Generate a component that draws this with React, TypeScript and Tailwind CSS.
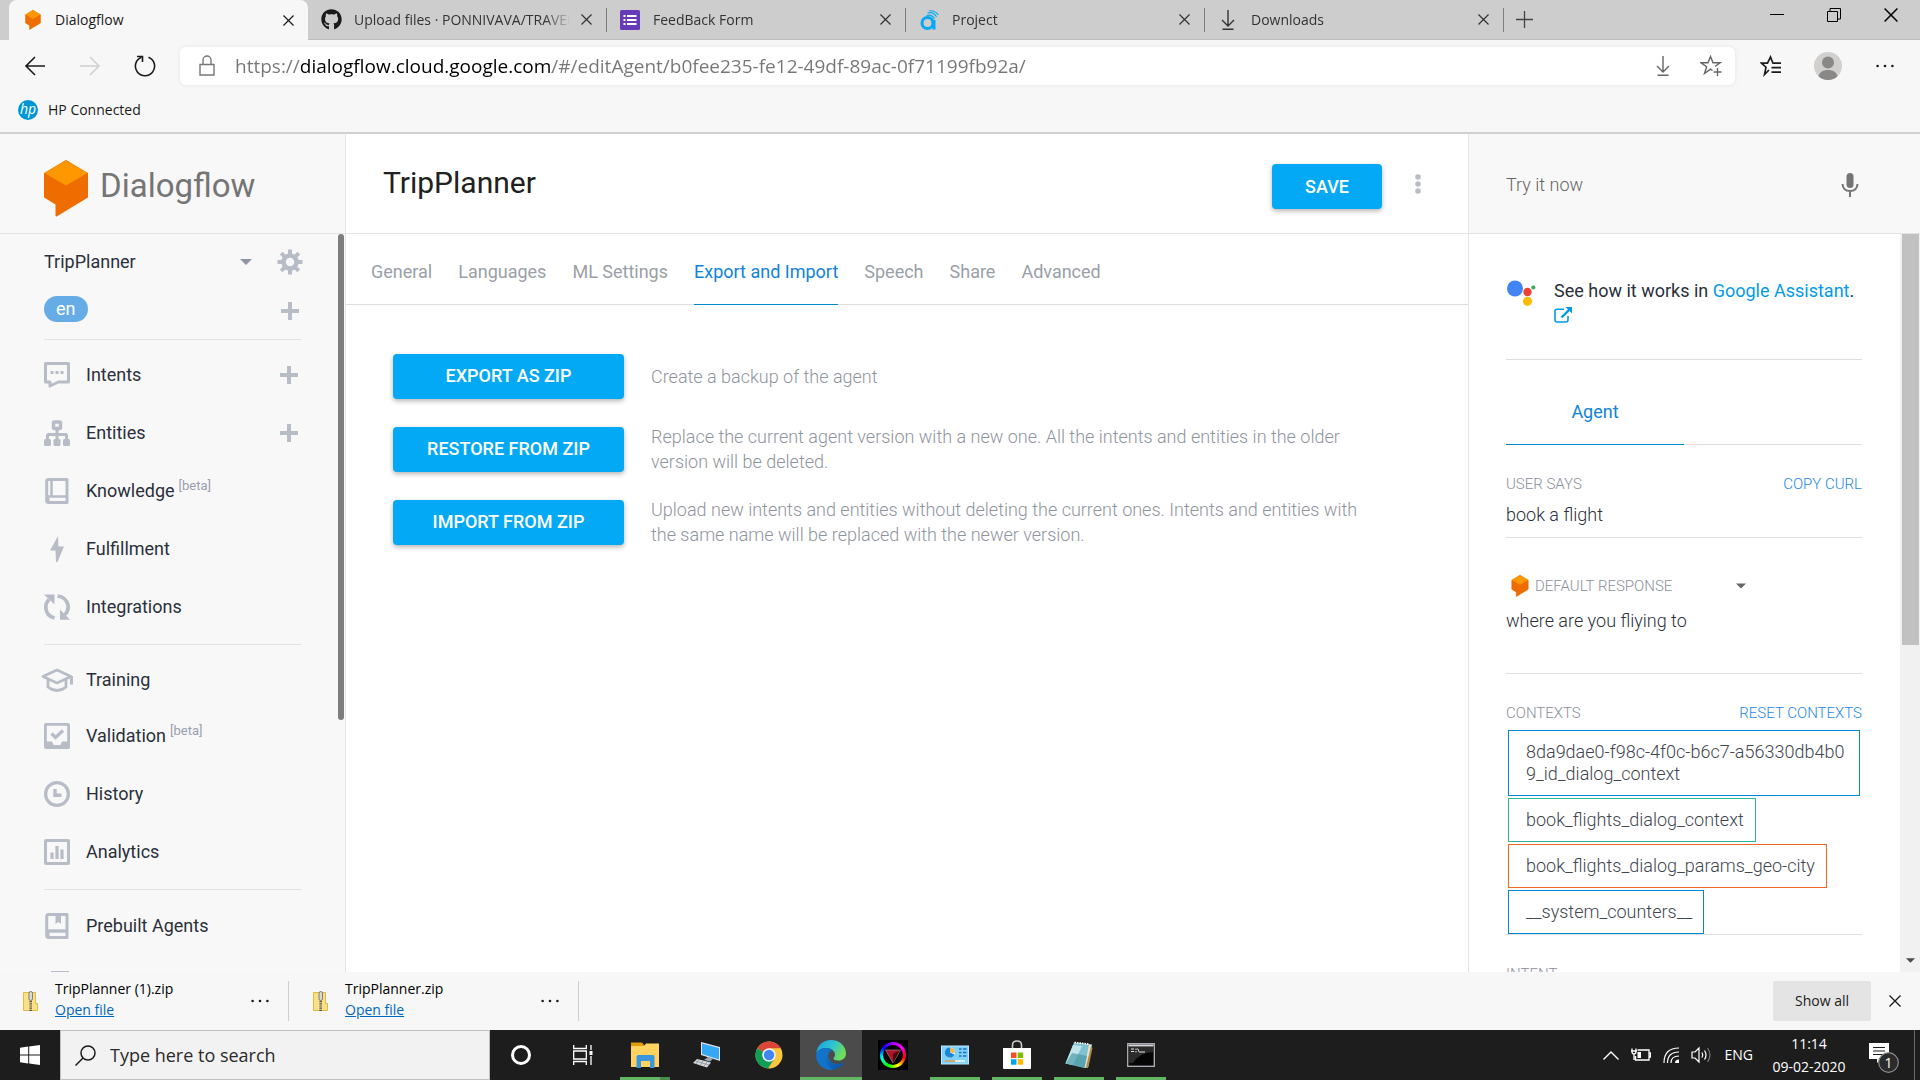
import React from "react";
import { FaGithub } from "react-icons/fa";

type IconProps = { className?: string };

const SEGOE = "font-['Open_Sans','Noto_Sans',sans-serif]";

/* ---------- Browser chrome icons ---------- */

function DialogflowMark({ className }: IconProps) {
  return (
    <svg viewBox="0 0 44 57" className={className} aria-hidden="true">
      <path d="M22 1 43 13.5V37L12.500 55.500V44L1 37V13.500Z" fill="#ef6c00" stroke="#ef6c00" strokeWidth="2" strokeLinejoin="round" />
      <path d="M22 0.500 43.500 13 22 25.500 0.500 13Z" fill="#ff9800" />
    </svg>
  );
}

function FormsIcon() {
  return (
    <svg viewBox="0 0 20 20" className="size-5" aria-hidden="true">
      <rect width="20" height="20" rx="1.500" fill="#673ab7" />
      <g fill="#fff">
        <rect x="3.500" y="5" width="2" height="2" />
        <rect x="3.500" y="9" width="2" height="2" />
        <rect x="3.500" y="13" width="2" height="2" />
        <rect x="7" y="5" width="9.500" height="2" />
        <rect x="7" y="9" width="9.500" height="2" />
        <rect x="7" y="13" width="9.500" height="2" />
      </g>
    </svg>
  );
}

function ProjectIcon() {
  return (
    <svg viewBox="0 0 20 20" className="size-5" fill="none" stroke="#03a9f4" aria-hidden="true">
      <circle cx="8.500" cy="13" r="5.500" strokeWidth="3" />
      <path d="M15 10V19.500" strokeWidth="3" />
      <path d="M7.500 5.500C11 4.500 14 6 15.500 9M8.500 3C12.500 2 16 4 17.500 7M10 .8C13.500.5 17.500 2 19.200 5" strokeWidth="1.100" />
    </svg>
  );
}

function DownArrow({ className }: IconProps) {
  return (
    <svg viewBox="0 0 20 20" className={className} fill="none" stroke="currentColor" strokeWidth="1.400" aria-hidden="true">
      <path d="M10 0V15.500M4 10 10 16 16 10M4.500 19.300H15.500" />
    </svg>
  );
}

function Cross({ className }: IconProps) {
  return (
    <svg viewBox="0 0 12 12" className={className} fill="none" stroke="currentColor" strokeWidth="1.300" aria-hidden="true">
      <path d="M.5.500 11.500 11.500M11.500.500.500 11.500" />
    </svg>
  );
}

function Dots({ className }: IconProps) {
  return (
    <svg viewBox="0 0 18 4" className={className} fill="currentColor" aria-hidden="true">
      <circle cx="1.600" cy="2" r="1.300" />
      <circle cx="9" cy="2" r="1.300" />
      <circle cx="16.400" cy="2" r="1.300" />
    </svg>
  );
}

/* ---------- Sidebar icons ---------- */

function SideSvg({ children }: { children: React.ReactNode }) {
  return (
    <svg viewBox="0 0 26 26" className="size-[26px] shrink-0 text-[#b7bcc6]" fill="none" stroke="currentColor" aria-hidden="true">
      {children}
    </svg>
  );
}

const IntentsIcon = () => (
  <SideSvg>
    <path d="M1.500 1.500H24.500V20H14.500L6 24V20H1.500Z" strokeWidth="3" strokeLinejoin="round" />
    <path d="M6.500 10.500H9.500M11.500 10.500H14.500M16.500 10.500H19.500" strokeWidth="3" />
  </SideSvg>
);
const EntitiesIcon = () => (
  <SideSvg>
    <rect x="9.500" y="2" width="7" height="6.500" rx="1" strokeWidth="3.500" />
    <path d="M13 9V20M3.500 20V15.500Q3.500 14.500 4.500 14.500H21.500Q22.500 14.500 22.500 15.500V20" strokeWidth="3" />
    <g fill="currentColor" stroke="none">
      <rect x="0" y="19" width="7" height="7" rx="1.500" />
      <rect x="9.500" y="19" width="7" height="7" rx="1.500" />
      <rect x="19" y="19" width="7" height="7" rx="1.500" />
    </g>
  </SideSvg>
);
const KnowledgeIcon = () => (
  <SideSvg>
    <path d="M4.500 1.500H23V24.500H4.500Q2.700 24.500 2.700 22.500V3.500Q2.700 1.500 4.500 1.500Z" strokeWidth="3" strokeLinejoin="round" />
    <path d="M7.500 2V18M3 18.500H23" strokeWidth="2.600" />
    <path d="M3 20H5V24H3Z" fill="currentColor" />
  </SideSvg>
);
const FulfillmentIcon = () => (
  <SideSvg>
    <path d="M14 0 6 14.500H11.500L12 26H13.500L20 10.500H14.500Z" fill="currentColor" stroke="none" />
  </SideSvg>
);
const IntegrationsIcon = () => (
  <SideSvg>
    <path d="M5 5.500Q1.500 9 1.800 14Q2.500 22 10.500 24M13.500 2Q22 3 24 11Q25 17 20.500 21" strokeWidth="3.600" />
    <path d="M0 .5H10.500V10.500ZM26 25.800H16V15.500Z" fill="currentColor" stroke="none" />
  </SideSvg>
);
const TrainingIcon = () => (
  <svg viewBox="0 0 34 26" className="h-[26px] w-[34px] shrink-0 text-[#b7bcc6]" fill="none" stroke="currentColor" strokeLinejoin="round" aria-hidden="true">
    <path d="M3 9.500 17 3 31 9.500 17 16Z" strokeWidth="2.600" />
    <path d="M8 12V20Q17 27 26 20V12" strokeWidth="2.800" />
    <path d="M31.500 9V17.500" strokeWidth="3" />
  </svg>
);
const ValidationIcon = () => (
  <SideSvg>
    <rect x="1.400" y="1.400" width="23.200" height="23.200" rx=".6" strokeWidth="2.800" />
    <path d="M1 18.500H8L9.500 22H16.500L18 18.500H25V25H1Z" fill="currentColor" stroke="none" />
    <path d="M7.500 10.500 11.500 14.500 19 7.500" strokeWidth="3.200" />
  </SideSvg>
);
const HistoryIcon = () => (
  <SideSvg>
    <circle cx="13" cy="13" r="11.400" strokeWidth="3.200" />
    <path d="M11 8V14.200H17.500" strokeWidth="3.400" />
  </SideSvg>
);
const AnalyticsIcon = () => (
  <SideSvg>
    <rect x="1.500" y="1.500" width="23" height="23" rx=".6" strokeWidth="3" />
    <path d="M8 13.500V20M13 7V20M18 10.500V20" strokeWidth="3.200" />
  </SideSvg>
);
const PrebuiltIcon = () => (
  <SideSvg>
    <path d="M4.500 1.500H23V24.500H5Q2.700 24.500 2.700 22.500V3.500Q2.700 1.500 4.500 1.500Z" strokeWidth="3" strokeLinejoin="round" />
    <path d="M3 18H23" strokeWidth="3.400" />
    <path d="M11.500 2V11L14.200 9 17 11V2ZM3 19H5.500V25H3Z" fill="currentColor" stroke="none" />
  </SideSvg>
);
const SmallTalkIcon = () => (
  <SideSvg>
    <path d="M8.500 1.500H23.500V17H8.500Z" strokeWidth="3" />
  </SideSvg>
);

function PlusIcon() {
  return (
    <svg viewBox="0 0 18 18" className="size-[18px]" stroke="#b7bcc6" strokeWidth="4" aria-hidden="true">
      <path d="M9 0V18M0 9H18" />
    </svg>
  );
}

function GearIcon() {
  return (
    <svg viewBox="0 0 26 26" className="size-[26px]" fill="none" stroke="#b7bcc6" aria-hidden="true">
      <circle cx="13" cy="13" r="6.500" strokeWidth="4.500" />
      <path
        d="M13 .5V5M13 21V25.500M.5 13H5M21 13H25.500M4.200 4.200 7.400 7.400M18.600 18.600 21.800 21.800M21.800 4.200 18.600 7.400M7.400 18.600 4.200 21.800"
        strokeWidth="4"
      />
    </svg>
  );
}

function Caret({ className }: IconProps) {
  return (
    <svg viewBox="0 0 12 6" className={className} fill="currentColor" aria-hidden="true">
      <path d="M0 0H12L6 6Z" />
    </svg>
  );
}

/* ---------- Browser frame ---------- */

type Tab = { title: string; icon: React.ReactNode };

const tabs: Tab[] = [
  { title: "Upload files · PONNIVAVA/TRAVEL", icon: <FaGithub className="size-[21px] text-[#1b1b1b]" /> },
  { title: "FeedBack Form", icon: <FormsIcon /> },
  { title: "Project", icon: <ProjectIcon /> },
  { title: "Downloads", icon: <DownArrow className="size-5" /> },
];

function TabBar() {
  return (
    <div className="flex h-10 shrink-0 items-stretch bg-[#cdcdcd] pl-[9px] text-sm text-[#333]">
      <div className="flex w-[299px] items-center rounded-t-lg bg-[#f7f7f7] pr-2.5 pl-4 text-[#1b1b1b]">
        <DialogflowMark className="h-5 w-4" />
        <span className="ml-[14px] flex-1">Dialogflow</span>
        <button aria-label="Close Dialogflow tab" className="p-1">
          <Cross className="size-[11px]" />
        </button>
      </div>
      {tabs.map((t) => (
        <div key={t.title} className="flex w-[299px] items-center border-b border-[#bdbdbd] pl-3">
          <span className="flex w-[22px] shrink-0 justify-center">{t.icon}</span>
          <span className="ml-3 flex-1 overflow-hidden whitespace-nowrap [mask-image:linear-gradient(to_right,#000_190px,transparent_218px)]">
            {t.title}
          </span>
          <button aria-label={"Close " + t.title + " tab"} className="ml-2 p-1">
            <Cross className="size-[11px]" />
          </button>
          <span className="ml-2.5 h-6 w-px bg-[#7d7d7d]" />
        </div>
      ))}
      <div className="flex flex-1 items-center justify-between border-b border-[#bdbdbd] pr-[22px] pl-3">
        <button aria-label="New tab">
          <svg viewBox="0 0 17 17" className="size-[17px]" stroke="#444" strokeWidth="1.300" aria-hidden="true">
            <path d="M8.500 0V17M0 8.500H17" />
          </svg>
        </button>
        <div className="flex items-center gap-[43px] pb-2.5 text-black">
          <button aria-label="Minimize">
            <svg viewBox="0 0 14 14" className="size-3.5" stroke="currentColor" aria-hidden="true">
              <path d="M0 6.500H14" />
            </svg>
          </button>
          <button aria-label="Restore">
            <svg viewBox="0 0 14 14" className="size-3.5" fill="none" stroke="currentColor" aria-hidden="true">
              <path d="M.5 3.500H10.500V13.500H.5ZM3 3.500V.5H13.500V11H10.500" />
            </svg>
          </button>
          <button aria-label="Close window">
            <Cross className="size-3.5" />
          </button>
        </div>
      </div>
    </div>
  );
}

function Toolbar() {
  return (
    <div className="flex h-[51px] shrink-0 items-center pr-[26px] pl-6 text-[#1b1b1b]">
      <button aria-label="Back">
        <svg viewBox="0 0 22 20" className="h-5 w-[22px]" fill="none" stroke="currentColor" strokeWidth="1.600" aria-hidden="true">
          <path d="M21 10H2M11 1 2 10 11 19" />
        </svg>
      </button>
      <button aria-label="Forward" className="ml-[33px] text-[#d0d0d0]">
        <svg viewBox="0 0 22 20" className="h-5 w-[22px]" fill="none" stroke="currentColor" strokeWidth="1.600" aria-hidden="true">
          <path d="M1 10H20M11 1 20 10 11 19" />
        </svg>
      </button>
      <button aria-label="Reload" className="ml-[33px]">
        <svg viewBox="0 0 22 22" className="size-[22px]" fill="none" stroke="currentColor" strokeWidth="1.600" aria-hidden="true">
          <path d="M14.500 2.200A9.600 9.600 0 1 1 7.500 2.200" />
          <path d="M3 1.500H8.500V7" />
        </svg>
      </button>
      <div className="ml-6 flex h-[38px] flex-1 items-center rounded-md bg-white pr-[13px] pl-[19px] shadow-[0_0_5px_rgba(0,0,0,0.08)]">
        <svg viewBox="0 0 16 21" className="h-[21px] w-4 text-[#777]" fill="none" stroke="currentColor" strokeWidth="1.400" aria-hidden="true">
          <path d="M1 9.500H15V20H1ZM4 9.500V5A4 4 0 0 1 12 5V9.500" />
        </svg>
        <input
          aria-label="Address"
          defaultValue="https://dialogflow.cloud.google.com/#/editAgent/b0fee235-fe12-49df-89ac-0f71199fb92a/"
          className="ml-5 h-[34px] min-w-0 flex-1 bg-[linear-gradient(to_right,#767676_65px,#000_65px,#000_317px,#767676_317px)] bg-clip-text text-[19px] text-transparent outline-none"
        />
        <button aria-label="Downloads" className="text-[#666]">
          <DownArrow className="size-5" />
        </button>
        <button aria-label="Add to favorites" className="ml-[27px] text-[#666]">
          <svg viewBox="0 0 22 22" className="size-[22px]" fill="none" stroke="currentColor" strokeWidth="1.400" aria-hidden="true">
            <path d="M12.500 15.500 10.500 14.200 4.500 18.500 6.700 11.700 1 7.800H8L10.500 1.500 13 7.800H20L15 11.500" />
            <path d="M17.500 13V21M13.500 17H21.500" />
          </svg>
        </button>
      </div>
      <button aria-label="Favorites" className="ml-[25px]">
        <svg viewBox="0 0 22 22" className="size-[22px]" fill="none" stroke="currentColor" strokeWidth="1.700" aria-hidden="true">
          <path d="M9 15 4.500 19.500 6 12.200 1.500 8.200H7.500L10.500 2 13 8.200H21M11.500 12.700H21M11.500 17.200H21" />
        </svg>
      </button>
      <button aria-label="Profile" className="ml-8 size-7 overflow-hidden rounded-full bg-[#d2d0ce]">
        <svg viewBox="0 0 28 28" fill="#8a8886" aria-hidden="true">
          <circle cx="14" cy="10.500" r="6" />
          <path d="M4 28C4 20 9 18 14 18S24 20 24 28Z" />
        </svg>
      </button>
      <button aria-label="Settings and more" className="ml-[34px]">
        <Dots className="h-1 w-[18px]" />
      </button>
    </div>
  );
}

function Bookmarks() {
  return (
    <div className="flex h-[43px] shrink-0 items-start border-b-2 border-[#d0d0d0] pt-[9px] pl-[18px] text-sm text-[#1b1b1b]">
      <a href="#hp" className="flex items-center gap-2.5">
        <span className="flex size-5 items-center justify-center rounded-full bg-[#0096d6] pb-0.5 text-sm leading-none font-normal text-white italic">hp</span>
        HP Connected
      </a>
    </div>
  );
}

/* ---------- Dialogflow sidebar ---------- */

type NavItem = { label: string; icon: React.ReactNode; beta?: boolean; add?: boolean };

function NavRow({ item, height = "h-[58px]" }: { item: NavItem; height?: string }) {
  return (
    <li className={"flex items-center " + height}>
      <a href={"#" + item.label} className="flex flex-1 items-center">
        <span className="flex w-[26px] shrink-0 justify-center">{item.icon}</span>
        <span className="ml-4">{item.label}</span>
        {item.beta && <span className="mb-2.5 ml-1 text-[13px] text-[#9a9fae]">[beta]</span>}
      </a>
      {item.add && (
        <button aria-label={"Add " + item.label} className="mr-[3px]">
          <PlusIcon />
        </button>
      )}
    </li>
  );
}

function Sidebar() {
  const first: NavItem[] = [
    { label: "Intents", icon: <IntentsIcon />, add: true },
    { label: "Entities", icon: <EntitiesIcon />, add: true },
    { label: "Knowledge", icon: <KnowledgeIcon />, beta: true },
    { label: "Fulfillment", icon: <FulfillmentIcon /> },
    { label: "Integrations", icon: <IntegrationsIcon /> },
  ];
  const second: NavItem[] = [
    { label: "Training", icon: <TrainingIcon /> },
    { label: "Validation", icon: <ValidationIcon />, beta: true },
    { label: "History", icon: <HistoryIcon /> },
    { label: "Analytics", icon: <AnalyticsIcon /> },
  ];
  return (
    <aside className="flex w-[346px] shrink-0 flex-col border-r border-[#e4e4e4] bg-[#f8f8f8] text-lg text-[#2b303b]">
      <div className="flex h-[100px] shrink-0 items-center border-b border-[#e4e4e4] pt-2.5 pl-11">
        <DialogflowMark className="h-[57px] w-11" />
        <span className="ml-3 pb-1.5 text-[33px] leading-10 text-[#757575]">Dialogflow</span>
      </div>
      <div className="flex min-h-0 flex-1">
        <div className="min-w-0 flex-1 overflow-hidden pr-[37px] pl-11">
          <div className="flex h-14 items-center">
            <div className="relative flex flex-1 items-center">
              <select aria-label="Agent" className="w-[212px] appearance-none bg-transparent outline-none">
                <option>TripPlanner</option>
              </select>
              <Caret className="pointer-events-none absolute right-[25px] h-1.5 w-3 text-[#8f95a5]" />
            </div>
            <button aria-label="Agent settings" className="-mr-0.5">
              <GearIcon />
            </button>
          </div>
          <div className="flex h-[50px] items-start justify-between border-b border-[#e2e2e2] pt-1.5">
            <span className="h-[26px] rounded-full bg-[#66ade8] px-3 leading-[25px] text-white">en</span>
            <button aria-label="Add language" className="mt-1.5 mr-0.5">
              <PlusIcon />
            </button>
          </div>
          <ul className="border-b border-[#e2e2e2] pt-1.5 pb-2">
            {first.map((i) => (
              <NavRow key={i.label} item={i} />
            ))}
          </ul>
          <ul className="border-b border-[#e2e2e2] pt-2 pb-2">
            {second.map((i) => (
              <NavRow key={i.label} item={i} height={i.label === "Training" ? "h-[54px]" : "h-[58px]"} />
            ))}
          </ul>
          <ul className="pt-[7px]">
            <NavRow item={{ label: "Prebuilt Agents", icon: <PrebuiltIcon /> }} />
            <li className="flex h-[58px] items-center">
              <a href="#small-talk" aria-label="Small Talk">
                <SmallTalkIcon />
              </a>
            </li>
          </ul>
        </div>
        <div className="mr-px h-[486px] w-1.5 shrink-0 rounded-full bg-[#7d7d7d]" />
      </div>
    </aside>
  );
}

/* ---------- Main panel ---------- */

const blueButton = "h-[45px] rounded-sm bg-[#03a9f4] text-lg font-medium text-white shadow-[0_2px_5px_rgba(0,0,0,0.3)]";

const actions = [
  { label: "EXPORT AS ZIP", text: "Create a backup of the agent" },
  {
    label: "RESTORE FROM ZIP",
    text: "Replace the current agent version with a new one. All the intents and entities in the older version will be deleted.",
  },
  {
    label: "IMPORT FROM ZIP",
    text: "Upload new intents and entities without deleting the current ones. Intents and entities with the same name will be replaced with the newer version.",
  },
];

const sections = ["General", "Languages", "ML Settings", "Export and Import", "Speech", "Share", "Advanced"];

function MainPanel() {
  return (
    <main className="flex min-w-0 flex-1 flex-col bg-white">
      <header className="flex h-[100px] items-center border-b border-[#e4e4e4] pr-[47px] pl-[37px]">
        <h1 className="flex-1 pb-0.5 text-[30px] text-[#212121]">TripPlanner</h1>
        <button className={blueButton + " mt-1.5 w-[110px]"}>SAVE</button>
        <button aria-label="More options" className="ml-[33px]">
          <svg viewBox="0 0 6 20" className="h-5 w-1.5" fill="#b7bcc6" aria-hidden="true">
            <circle cx="3" cy="3" r="2.800" />
            <circle cx="3" cy="10" r="2.800" />
            <circle cx="3" cy="17" r="2.800" />
          </svg>
        </button>
      </header>
      <nav className="flex h-[71px] gap-[26px] border-b border-[#dedede] pl-[25px] text-lg text-[#9a9fa8]">
        {sections.map((s) => (
          <a
            key={s}
            href={"#" + s}
            className={
              s === "Export and Import"
                ? "-mb-px flex items-center border-b border-[#0288d1] text-[#1083dc]"
                : "flex items-center"
            }
          >
            <span className="mt-1.5 pb-px">{s}</span>
          </a>
        ))}
      </nav>
      <div className="flex flex-col gap-[23px] pt-[46px] pr-9 pl-[47px]">
        {actions.map((a) => (
          <div key={a.label} className="flex min-h-[50px] items-center">
            <button className={blueButton + " w-[231px] shrink-0"}>{a.label}</button>
            <p className="ml-[27px] max-w-[720px] text-lg leading-[25px] font-light text-[#8f949e]">{a.text}</p>
          </div>
        ))}
      </div>
    </main>
  );
}

/* ---------- Test console ---------- */

const contexts = [
  { name: "8da9dae0-f98c-4f0c-b6c7-a56330db4b09_id_dialog_context", border: "border-[#0288d1]" },
  { name: "book_flights_dialog_context", border: "border-[#2bb596]" },
  { name: "book_flights_dialog_params_geo-city", border: "border-[#f26722]" },
  { name: "__system_counters__", border: "border-[#0288d1]" },
];

const caption = "text-[15px] leading-6 font-light text-[#8a8f99]";
const captionLink = "text-[15px] leading-6 font-light text-[#1e88e5]";

function TestPanel() {
  return (
    <aside className="flex w-[452px] shrink-0 flex-col border-l border-[#e4e4e4] bg-white text-lg text-[#2b303b]">
      <div className="flex h-[100px] shrink-0 items-center border-b border-[#e4e4e4] bg-[#f8f8f8] pt-0.5 pr-[61px] pl-[37px]">
        <input aria-label="Try it now" placeholder="Try it now" className="min-w-0 flex-1 font-light outline-none placeholder:text-[#666]" />
        <button aria-label="Speak">
          <svg viewBox="0 0 18 24" className="h-6 w-[18px]" fill="none" stroke="#757575" aria-hidden="true">
            <rect x="5.500" y="0" width="7" height="15" rx="3.500" fill="#757575" stroke="none" />
            <path d="M1.500 11Q2 18 9 18T16.500 11M9 18V24" strokeWidth="2" />
          </svg>
        </button>
      </div>
      <div className="flex min-h-0 flex-1">
        <div className="min-w-0 flex-1 overflow-hidden pr-[38px] pl-[37px]">
          <div className="flex border-b border-[#dedede] pt-[45px] pb-8">
            <svg viewBox="0 0 30 27" className="h-[27px] w-[30px] shrink-0" aria-hidden="true">
              <circle cx="9" cy="9.500" r="8" fill="#4285f4" />
              <circle cx="21.500" cy="13" r="4.200" fill="#ea4335" />
              <circle cx="21.500" cy="22.300" r="4.600" fill="#fbbc05" />
              <circle cx="27.300" cy="8.500" r="2" fill="#34a853" />
            </svg>
            <p className="ml-[18px] leading-6">
              See how it works in{" "}
              <a href="#assistant" className="text-[#039be5]">
                Google Assistant
              </a>
              .
              <a href="#assistant-link" aria-label="Open Google Assistant" className="block h-6 pt-1">
                <svg viewBox="0 0 18 16" className="h-4 w-[18px]" fill="none" stroke="#039be5" aria-hidden="true">
                  <path d="M10 2.200H3Q1 2.200 1 4V13Q1 15 3 15H12Q14 15 14 13V9" strokeWidth="1.600" />
                  <path d="M7.500 10.500 15.500 2.500" strokeWidth="2.400" />
                  <path d="M11.500 0H18V6.500Z" fill="#039be5" stroke="none" />
                </svg>
              </a>
            </p>
          </div>
          <div className="flex border-b border-[#dedede]">
            <button className="-mb-px w-1/2 border-b border-[#0288d1] pt-10 pb-5 leading-6 text-[#1083dc]">Agent</button>
          </div>
          <section className="border-b border-[#dedede] pt-[27px] pb-2.5">
            <div className="flex justify-between">
              <h2 className={caption}>USER SAYS</h2>
              <button className={captionLink}>COPY CURL</button>
            </div>
            <p className="mt-[7px] leading-6 font-light">book a flight</p>
          </section>
          <section className="border-b border-[#dedede] pt-9 pb-10">
            <div className="relative flex h-6 items-center pl-[5px]">
              <DialogflowMark className="h-[22px] w-[18px]" />
              <select aria-label="Response platform" className={caption + " ml-1.5 w-[212px] appearance-none bg-transparent outline-none"}>
                <option>DEFAULT RESPONSE</option>
              </select>
              <Caret className="pointer-events-none absolute left-[230px] h-1.5 w-2.5 text-[#666]" />
            </div>
            <p className="mt-[11px] leading-6 font-light">where are you fliying to</p>
          </section>
          <section className="border-b border-[#dedede] pt-[27px]">
            <div className="flex justify-between">
              <h2 className={caption}>CONTEXTS</h2>
              <button className={captionLink}>RESET CONTEXTS</button>
            </div>
            <ul className="mt-[5px] flex flex-col items-start gap-0.5 px-0.5">
              {contexts.map((c) => (
                <li key={c.name} className={"border py-2.5 pr-[11px] pl-[17px] leading-[22px] font-light break-all text-[#41464f] " + c.border}>
                  {c.name}
                </li>
              ))}
            </ul>
          </section>
          <section className="pt-[27px]">
            <h2 className={caption}>INTENT</h2>
          </section>
        </div>
        <div className="flex w-5 shrink-0 flex-col items-center justify-between bg-[#f1f1f1] pb-[9px]">
          <div className="h-[411px] w-[17px] bg-[#c1c1c1]" />
          <Caret className="h-[5px] w-[9px] text-[#4a4a4a]" />
        </div>
      </div>
    </aside>
  );
}

/* ---------- Downloads bar ---------- */

function ZipIcon() {
  return (
    <svg viewBox="0 0 15 20" className="h-5 w-[15px]" aria-hidden="true">
      <path d="M.5 1.500H12.500V12.500H14.500V19.500H.5Z" fill="#fbe08a" stroke="#e6b93f" />
      <rect x="6" y=".5" width="3.500" height="9" rx="1.700" fill="#d9d9d9" stroke="#666" strokeWidth=".8" />
      <path d="M7.700 10V20" stroke="#555" strokeWidth="2.600" strokeDasharray="1.200 1" />
    </svg>
  );
}

function DownloadsBar() {
  return (
    <div className={"flex h-[58px] shrink-0 items-center bg-[#f7f7f7] pr-[19px] text-sm text-[#1b1b1b] " + SEGOE}>
      {["TripPlanner (1).zip", "TripPlanner.zip"].map((f) => (
        <div key={f} className="mr-px flex h-10 w-[289px] items-center border-r border-[#cfcfcf] pr-[19px] pl-[23px]">
          <ZipIcon />
          <div className="mb-1 ml-[17px] flex-1 leading-[21px]">
            <div className="text-black">{f}</div>
            <a href={"#" + f} className="text-[#0067c0] underline">
              Open file
            </a>
          </div>
          <button aria-label={"Options for " + f}>
            <Dots className="h-1 w-[18px]" />
          </button>
        </div>
      ))}
      <button className="ml-auto h-10 w-[98px] rounded-xs bg-[#e4e4e4] font-medium">Show all</button>
      <button aria-label="Close downloads bar" className="ml-[18px]">
        <Cross className="size-3" />
      </button>
    </div>
  );
}

/* ---------- Windows taskbar ---------- */

const ExplorerIcon = () => (
  <svg viewBox="0 0 28 28" className="size-7" aria-hidden="true">
    <path d="M0 1.500H11L13.500 4.500V6H0Z" fill="#e19c00" />
    <path d="M0 5H13L15 2.500H28V26H0Z" fill="#ffd35e" />
    <path d="M5.500 27V15.500Q5.500 14 7 14H22Q23.500 14 23.500 15.500V27H19V20H10V27Z" fill="#3a97df" />
  </svg>
);
const PcIcon = () => (
  <svg viewBox="0 0 28 28" className="size-7" aria-hidden="true">
    <path d="M8 1 27 6V20L8 14Z" fill="#dfe6ec" />
    <path d="M9 2.500 26 7V18.500L9 13Z" fill="#36a7f5" />
    <path d="M15 16 20 18 17 20.500 11 19Z" fill="#9aa7b3" />
    <path d="M4 18 18 21.500 14 26.500 0 22Z" fill="#d5d9dd" />
    <path d="M2.500 20 16 24M6 18.500 3 23M10.500 19.500 7 24.500M14.500 20.500 11 25.500" stroke="#87919b" strokeWidth=".8" />
  </svg>
);
const ChromeIcon = () => (
  <svg viewBox="0 0 28 28" className="size-7" aria-hidden="true">
    <circle cx="14" cy="14" r="13.500" fill="#fbc73d" />
    <path d="M14 14 2.300 7.200A13.500 13.500 0 0 1 25.700 7.300H14Z" fill="#db4437" />
    <path d="M2.300 7.200A13.500 13.500 0 0 0 13 27.500L19.500 17.500 14 14Z" fill="#0f9d58" />
    <circle cx="14" cy="14" r="6.800" fill="#f1f1f1" />
    <circle cx="14" cy="14" r="5.200" fill="#4285f4" />
  </svg>
);
const EdgeIcon = () => (
  <svg viewBox="0 0 30 30" className="size-[30px]" aria-hidden="true">
    <defs>
      <linearGradient id="edgeTop" x1="0" y1="0" x2="1" y2="0.400">
        <stop offset="0" stopColor="#1b9de2" />
        <stop offset=".55" stopColor="#2cc3d5" />
        <stop offset="1" stopColor="#6fdc5a" />
      </linearGradient>
      <linearGradient id="edgeBody" x1="0" y1="0" x2="1" y2="1">
        <stop offset="0" stopColor="#1479d2" />
        <stop offset="1" stopColor="#0c4f9e" />
      </linearGradient>
    </defs>
    <path d="M.3 13.500C1 5 7.500 0 15 0 23.500 0 30 6 30 13.500 30 18 26.500 20.500 22.500 20.500 19 20.500 17.500 19.500 17.500 18.500S19 17 19 14.500C19 11 15 8 10.500 8 5 8 1.500 10.500.3 13.500Z" fill="url(#edgeTop)" />
    <path d="M.2 14C1.500 10.500 5 8 10.500 8 13 8 15.500 9 17 10.500 12.500 9.500 9.500 14 10.500 19 11.500 25 17 27.500 22 26.500 19.500 29 17.500 30 14.500 30 6 29.500-.5 23 .2 14Z" fill="#1173cc" />
    <path d="M16 10.500C10 11 8 17 10 22 12 27 16 30 18.500 29.500 22.500 28.500 26 26 28 23.200 28.300 22.600 27.800 22.300 27.200 22.600 21 25.500 13.500 23 12.300 17.500 11.500 14 13.500 11.500 16 10.500Z" fill="url(#edgeBody)" />
  </svg>
);
const WheelIcon = () => (
  <span className="flex size-[30px] items-center justify-center bg-black">
    <span className="flex size-[26px] items-center justify-center rounded-full bg-[conic-gradient(#a0f,#f0f,#f00,#ff0,#0f0,#0ff,#00f,#a0f)]">
      <span className="flex size-5 items-center justify-center rounded-full bg-black">
        <svg viewBox="0 0 18 18" className="size-[18px]" aria-hidden="true">
          <path d="M1.500 4H16.500L9 17Z" fill="#b01228" stroke="#8a8a8a" strokeWidth=".7" />
          <path d="M9 17 16 4 9 8Z" fill="#4a0a12" />
        </svg>
      </span>
    </span>
  </span>
);
const CardIcon = () => (
  <svg viewBox="0 0 28 20" className="h-5 w-7" aria-hidden="true">
    <rect x=".5" y="1" width="27" height="18" fill="#7fd0fb" stroke="#bfe8ff" />
    <circle cx="9" cy="7.500" r="5" fill="#e9f7ff" />
    <path d="M9 7.500V2.500A5 5 0 1 0 13.500 9.500Z" fill="#1a86d9" />
    <path d="M9 7.500V2.500A5 5 0 0 1 13.800 8Z" fill="#f4b73f" />
    <path d="M18 4H20.500M18 7.500H20.500M18 11H20.500M22 4H25.500M22 7.500H25.500M22 11H25.500" stroke="#1b6fb3" strokeWidth="1.400" />
    <path d="M4 16H16" stroke="#f0993a" strokeWidth="1.400" />
    <path d="M14 16H24" stroke="#fff" strokeWidth="1.400" />
  </svg>
);
const StoreIcon = () => (
  <svg viewBox="0 0 30 30" className="size-[30px]" aria-hidden="true">
    <path d="M10.500 8V5Q10.500 1 15 1T19.500 5V8" fill="none" stroke="#ccc" strokeWidth="1.600" />
    <path d="M1 8H29V28Q29 29 28 29H2Q1 29 1 28Z" fill="#fff" />
    <path d="M9 12.500H14.500V18H9Z" fill="#f25022" />
    <path d="M15.700 12.500H21.200V18H15.700Z" fill="#7fba00" />
    <path d="M9 19.200H14.500V24.700H9Z" fill="#00a4ef" />
    <path d="M15.700 19.200H21.200V24.700H15.700Z" fill="#ffb900" />
  </svg>
);
const NotepadIcon = () => (
  <svg viewBox="0 0 30 30" className="size-[30px]" aria-hidden="true">
    <path d="M13 3 28 4.500 24 27.500 20 28Z" fill="#e8e3d2" />
    <path d="M27 6 28.500 8 24.500 27H22Z" fill="#b08a45" />
    <path d="M10 2.500 25 4.500 20.500 28 1.500 23.500Z" fill="#7fc3cf" />
    <path d="M9 5 18 6 9 25 1.500 23.500Z" fill="#bfe5ea" />
    <path d="M8 13 23 16 20.500 28 2 23.500Z" fill="#3f8f9f" opacity=".6" />
    <path d="M10.500 2.500 25 4" stroke="#fff" strokeWidth="1.600" strokeDasharray="1.500 1" />
  </svg>
);
const CmdIcon = () => (
  <svg viewBox="0 0 28 24" className="h-6 w-7" aria-hidden="true">
    <rect x=".7" y=".7" width="26.600" height="22.600" fill="#050505" stroke="#a9a9b1" strokeWidth="1.400" />
    <path d="M1.500 1.500H26.500V3.500H1.500Z" fill="#d7d7db" />
    <path d="M2 4H26V9Q12 10 6 20H2Z" fill="#2b2b2b" />
    <path d="M4 6H7M4 8.500H7M9 5.500V7M9 8V9.500M10.500 5.500 12.500 9.500M13 9H18" stroke="#e8e8e8" strokeWidth="1" />
  </svg>
);

type TaskItem = { name: string; icon: React.ReactNode; state?: "open" | "active" | "multi" };

const tasks: TaskItem[] = [
  { name: "Cortana", icon: <span className="size-5 rounded-full border-3 border-white" /> },
  {
    name: "Task View",
    icon: (
      <svg viewBox="0 0 20 20" className="size-5" fill="none" stroke="#fff" strokeWidth="1.300" aria-hidden="true">
        <path d="M.7 0V3.500H13.300V0M.7 20V16.500H13.300V20M.7 6H13.300V14H.7ZM18 0V5M18 11V20" />
        <path d="M18 6V10" strokeWidth="3" />
      </svg>
    ),
  },
  { name: "File Explorer", icon: <ExplorerIcon />, state: "multi" },
  { name: "This PC", icon: <PcIcon /> },
  { name: "Chrome", icon: <ChromeIcon /> },
  { name: "Edge", icon: <EdgeIcon />, state: "active" },
  { name: "Color Wheel", icon: <WheelIcon /> },
  { name: "Control Panel", icon: <CardIcon />, state: "open" },
  { name: "Store", icon: <StoreIcon />, state: "open" },
  { name: "Notepad", icon: <NotepadIcon />, state: "open" },
  { name: "Command Prompt", icon: <CmdIcon />, state: "open" },
];

function Taskbar() {
  return (
    <div className={"flex h-[50px] shrink-0 items-stretch bg-[#1d1d1d] text-white " + SEGOE}>
      <button aria-label="Start" className="flex w-[60px] items-center justify-center">
        <svg viewBox="0 0 20 20" className="size-5" fill="#fff" aria-hidden="true">
          <path d="M0 2.800 8.200 1.600V9.500H0ZM9.200 1.500 20 0V9.500H9.200ZM0 10.500H8.200V18.400L0 17.200ZM9.200 10.500H20V20L9.200 18.500Z" />
        </svg>
      </button>
      <label className="flex w-[430px] items-center border border-[#bfbfbf] bg-[#f2f2f2] pl-3.5 text-[#1b1b1b]">
        <svg viewBox="0 0 21 21" className="size-[21px]" fill="none" stroke="currentColor" strokeWidth="1.500" aria-hidden="true">
          <circle cx="13" cy="8" r="7" />
          <path d="M8 13 .5 20.500" />
        </svg>
        <input aria-label="Search" placeholder="Type here to search" className="ml-3.5 min-w-0 flex-1 text-lg outline-none placeholder:text-[#2b2b2b]" />
      </label>
      {tasks.map((t) => (
        <button
          key={t.name}
          aria-label={t.name}
          className={"relative flex w-[62px] items-center justify-center " + (t.state === "active" ? "bg-[#4b4b4b]" : "")}
        >
          {t.icon}
          {t.state && (
            <span className={"absolute bottom-0 flex h-[3px] bg-[#63b663] " + (t.state === "active" ? "inset-x-0" : "inset-x-1.5")}>
              {t.state === "multi" && <span className="ml-auto w-2.5 bg-[#4b8a4b]" />}
            </span>
          )}
        </button>
      ))}
      <div className="ml-auto flex items-center">
        <button aria-label="Show hidden icons">
          <svg viewBox="0 0 16 9" className="h-[9px] w-4" fill="none" stroke="#fff" strokeWidth="1.400" aria-hidden="true">
            <path d="M.5 8.500 8 1 15.500 8.500" />
          </svg>
        </button>
        <svg viewBox="0 0 20 16" className="ml-3 h-4 w-5" fill="none" stroke="#fff" strokeWidth="1.300" aria-hidden="true">
          <path d="M6.500 3H18V13H4.500V9M18.500 6H19.500V10H18.500M1 1.500V4.500Q1 7 3 7T5 4.500V1.500M0 4H6M3 7V13" />
          <path d="M6.500 5H10V11H6.500Z" fill="#fff" stroke="none" />
        </svg>
        <svg viewBox="0 0 16 16" className="ml-3 size-4" fill="none" stroke="#fff" strokeWidth="1.200" aria-hidden="true">
          <path d="M1 16Q1 1 16 1M4.500 16Q4.500 5 16 5M8 16Q8 9 16 9" />
          <path d="M12 16Q12 12.500 16 12.500V16Z" fill="#fff" stroke="none" />
        </svg>
        <svg viewBox="0 0 21 18" className="ml-3 h-[18px] w-[21px]" fill="none" stroke="#fff" strokeWidth="1.200" aria-hidden="true">
          <path d="M1 6H4L8 2V16L4 12H1ZM11 6.500Q12.500 9 11 11.500M13.500 4.500Q16.500 9 13.500 13.500" />
          <path d="M16.500 2Q21.500 9 16.500 16" stroke="#777" />
        </svg>
        <span className="ml-[13px] text-sm">ENG</span>
        <div className="ml-4 w-20 text-center text-sm leading-[23px]">
          <div>11:14</div>
          <div>09-02-2020</div>
        </div>
        <button aria-label="Notifications" className="relative mt-1.5 ml-5 size-[30px]">
          <svg viewBox="0 0 30 30" className="size-[30px]" aria-hidden="true">
            <path d="M0 0H20V16H12L8 20V16H0Z" fill="#fff" />
            <path d="M4 4.500H16M4 8H16M4 11.500H16" stroke="#1d1d1d" strokeWidth="1.200" />
            <circle cx="19.500" cy="19.500" r="9.800" fill="#2b2b2b" stroke="#8a8a8a" strokeWidth="1.200" />
          </svg>
          <span className="absolute right-0 bottom-0 w-[21px] text-center text-sm leading-5">1</span>
        </button>
        <span className="ml-[15px] h-full w-px bg-[#6a6a6a]" />
        <span className="w-[5px]" />
      </div>
    </div>
  );
}

export default function App() {
  return (
    <div className="flex h-screen flex-col overflow-hidden bg-[#f7f7f7] font-['Roboto',sans-serif]">
      <div className={"flex shrink-0 flex-col " + SEGOE}>
        <TabBar />
        <Toolbar />
        <Bookmarks />
      </div>
      <div className="flex min-h-0 flex-1 overflow-hidden">
        <Sidebar />
        <MainPanel />
        <TestPanel />
      </div>
      <DownloadsBar />
      <Taskbar />
    </div>
  );
}
